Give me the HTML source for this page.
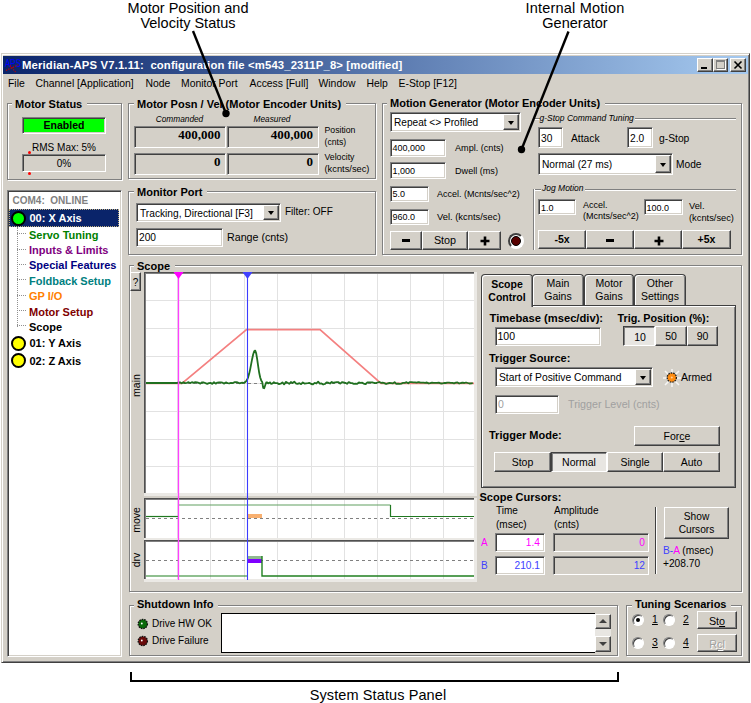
<!DOCTYPE html><html><head><meta charset="utf-8"><style>
html,body{margin:0;padding:0;background:#fff;width:751px;height:703px;overflow:hidden;}
body{position:relative;font-family:"Liberation Sans",sans-serif;}
.t{position:absolute;white-space:pre;line-height:1.117;}
.grp{position:absolute;box-sizing:border-box;border:1px solid #808080;box-shadow:inset 1px 1px 0 #fff,1px 1px 0 #fff;}
.sunk{position:absolute;box-sizing:border-box;border:1px solid;border-color:#808080 #fff #fff #808080;box-shadow:inset 1px 1px 0 #404040,inset -1px -1px 0 #d4d0c8;}
.btn{position:absolute;box-sizing:border-box;background:#d4d0c8;border:1px solid;border-color:#fff #404040 #404040 #fff;box-shadow:inset -1px -1px 0 #808080;}
.abs{position:absolute;}
</style></head><body>

<div class="t" style="left:-12px;width:400px;text-align:center;top:0.17px;font-size:14.5px;color:#000;">Motor Position and</div>
<div class="t" style="left:-12px;width:400px;text-align:center;top:15.17px;font-size:14.5px;color:#000;">Velocity Status</div>
<div class="t" style="left:375px;width:400px;text-align:center;top:0.17px;font-size:14.5px;color:#000;letter-spacing:0.2px">Internal Motion</div>
<div class="t" style="left:375px;width:400px;text-align:center;top:15.17px;font-size:14.5px;color:#000;">Generator</div>
<div class="abs" style="left:1px;top:53px;width:749px;height:610px;box-sizing:border-box;background:#d4d0c8;border:1px solid;border-color:#d4d0c8 #404040 #404040 #d4d0c8;box-shadow:inset 1px 1px 0 #fff,inset -1px -1px 0 #808080;"></div>
<div class="abs" style="left:3px;top:56px;width:745px;height:18px;background:linear-gradient(to right,#0a246a,#a6caf0);"></div>
<svg class="abs" style="left:4px;top:57px" width="18" height="16" viewBox="0 0 18 16"><text x="1" y="9.7" font-family="Liberation Sans" font-size="10" textLength="16" lengthAdjust="spacingAndGlyphs" fill="#0000ff">APS</text><path d="M2 13.5 L14 8 M6 8.5 L11.5 15" stroke="#c00000" stroke-width="1.3" stroke-dasharray="1.3 1.2"/></svg>
<div class="t" style="left:22px;top:58.90px;font-size:11.3px;color:#fff;font-weight:bold;letter-spacing:0.15px">Meridian-APS V7.1.11:  configuration file &lt;m543_2311P_8&gt; [modified]</div>
<div class="btn" style="left:697px;top:58px;width:16px;height:14px;"></div>
<div class="btn" style="left:713px;top:58px;width:15px;height:14px;"></div>
<div class="btn" style="left:730px;top:58px;width:16px;height:14px;"></div>
<div class="abs" style="left:701px;top:67px;width:6px;height:2px;background:#000"></div>
<div class="abs" style="left:716px;top:60px;width:9px;height:9px;box-sizing:border-box;border:1px solid #808080;border-top-width:2px;box-shadow:1px 1px 0 #fff"></div>
<svg class="abs" style="left:730px;top:58px" width="16" height="14"><path d="M4.5 3.5 L11.5 10.5 M11.5 3.5 L4.5 10.5" stroke="#000" stroke-width="1.6"/></svg>
<div class="t" style="left:8px;top:78.18px;font-size:10.4px;color:#000;">File</div>
<div class="t" style="left:35.5px;top:78.18px;font-size:10.4px;color:#000;">Channel [Application]</div>
<div class="t" style="left:145.5px;top:78.18px;font-size:10.4px;color:#000;">Node</div>
<div class="t" style="left:181px;top:78.18px;font-size:10.4px;color:#000;">Monitor Port</div>
<div class="t" style="left:249.5px;top:78.18px;font-size:10.4px;color:#000;">Access [Full]</div>
<div class="t" style="left:318.5px;top:78.18px;font-size:10.4px;color:#000;">Window</div>
<div class="t" style="left:366.5px;top:78.18px;font-size:10.4px;color:#000;">Help</div>
<div class="t" style="left:398.5px;top:78.18px;font-size:10.4px;color:#000;">E-Stop [F12]</div>
<div class="grp" style="left:7px;top:103px;width:115px;height:77px;"></div>
<div class="t" style="left:12px;top:97.56px;font-size:11px;padding:0 5px 0 3px;background:#d4d0c8;font-weight:bold;">Motor Status</div>
<div class="sunk" style="left:22px;top:117px;width:84px;height:17px;background:#00ff00;"></div>
<div class="t" style="left:-136px;width:400px;text-align:center;top:119.83px;font-size:10.5px;color:#000;font-weight:bold;">Enabled</div>
<div class="t" style="left:-136px;width:400px;text-align:center;top:141.60px;font-size:10px;color:#000;">RMS Max: 5%</div>
<div class="sunk" style="left:22px;top:154px;width:84px;height:18px;background:#d4d0c8;"></div>
<div class="t" style="left:-136px;width:400px;text-align:center;top:157.60px;font-size:10px;color:#000;">0%</div>
<div class="abs" style="left:28px;top:151px;width:3px;height:3px;background:#f00;border-radius:50%"></div>
<div class="abs" style="left:28px;top:172px;width:3px;height:3px;background:#f00;border-radius:50%"></div>
<div class="sunk" style="left:7px;top:190px;width:115px;height:467px;background:#fff;"></div>
<div class="t" style="left:12.5px;top:195.10px;font-size:10px;color:#808080;font-weight:bold;">COM4:  ONLINE</div>
<div class="abs" style="left:9px;top:209px;width:110px;height:18px;background:#0a246a;outline:1px dotted #c0b080;outline-offset:-1px"></div>
<div class="abs" style="left:11px;top:210.5px;width:15px;height:15px;border-radius:50%;background:#00ff00;border:2px solid #000;box-sizing:border-box"></div>
<div class="t" style="left:29.5px;top:212.06px;font-size:11px;color:#fff;font-weight:bold;">00: X Axis</div>
<div class="t" style="left:29px;top:228.66px;font-size:11px;color:#008000;font-weight:bold;">Servo Tuning</div>
<div class="abs" style="left:17px;top:233px;width:9px;height:0;border-top:1px dotted #909090"></div>
<div class="t" style="left:29px;top:244.06px;font-size:11px;color:#800080;font-weight:bold;">Inputs &amp; Limits</div>
<div class="abs" style="left:17px;top:249px;width:9px;height:0;border-top:1px dotted #909090"></div>
<div class="t" style="left:29px;top:259.46px;font-size:11px;color:#000080;font-weight:bold;">Special Features</div>
<div class="abs" style="left:17px;top:264px;width:9px;height:0;border-top:1px dotted #909090"></div>
<div class="t" style="left:29px;top:274.86px;font-size:11px;color:#008080;font-weight:bold;">Foldback Setup</div>
<div class="abs" style="left:17px;top:279px;width:9px;height:0;border-top:1px dotted #909090"></div>
<div class="t" style="left:29px;top:290.26px;font-size:11px;color:#ff8000;font-weight:bold;">GP I/O</div>
<div class="abs" style="left:17px;top:295px;width:9px;height:0;border-top:1px dotted #909090"></div>
<div class="t" style="left:29px;top:305.66px;font-size:11px;color:#800000;font-weight:bold;">Motor Setup</div>
<div class="abs" style="left:17px;top:310px;width:9px;height:0;border-top:1px dotted #909090"></div>
<div class="t" style="left:29px;top:321.06px;font-size:11px;color:#000;font-weight:bold;">Scope</div>
<div class="abs" style="left:17px;top:325px;width:9px;height:0;border-top:1px dotted #909090"></div>
<div class="abs" style="left:17px;top:227px;width:0;height:100px;border-left:1px dotted #909090"></div>
<div class="abs" style="left:11px;top:335.7px;width:15px;height:15px;border-radius:50%;background:#ffff00;border:2px solid #000;box-sizing:border-box"></div>
<div class="t" style="left:29.5px;top:337.26px;font-size:11px;color:#000;font-weight:bold;">01: Y Axis</div>
<div class="abs" style="left:11px;top:353.0px;width:15px;height:15px;border-radius:50%;background:#ffff00;border:2px solid #000;box-sizing:border-box"></div>
<div class="t" style="left:29.5px;top:354.56px;font-size:11px;color:#000;font-weight:bold;">02: Z Axis</div>
<div class="grp" style="left:128px;top:103px;width:248px;height:76px;"></div>
<div class="t" style="left:134px;top:97.56px;font-size:11px;padding:0 5px 0 3px;background:#d4d0c8;font-weight:bold;">Motor Posn / Vel (Motor Encoder Units)</div>
<div class="t" style="left:-20.5px;width:400px;text-align:center;top:115.02px;font-size:8.3px;color:#000;font-style:italic;">Commanded</div>
<div class="t" style="left:72px;width:400px;text-align:center;top:115.02px;font-size:8.3px;color:#000;font-style:italic;">Measured</div>
<div class="sunk" style="left:134px;top:126px;width:92px;height:22px;background:#d4d0c8;"></div>
<div class="sunk" style="left:227px;top:126px;width:92px;height:22px;background:#d4d0c8;"></div>
<div class="sunk" style="left:134px;top:153px;width:92px;height:22px;background:#d4d0c8;"></div>
<div class="sunk" style="left:227px;top:153px;width:92px;height:22px;background:#d4d0c8;"></div>
<div class="t" style="left:-179.5px;width:400px;text-align:right;top:127.98px;font-size:13px;color:#000;font-weight:bold;font-family:'Liberation Serif',serif;">400,000</div>
<div class="t" style="left:-87px;width:400px;text-align:right;top:127.98px;font-size:13px;color:#000;font-weight:bold;font-family:'Liberation Serif',serif;">400,000</div>
<div class="t" style="left:-179.5px;width:400px;text-align:right;top:155.48px;font-size:13px;color:#000;font-weight:bold;font-family:'Liberation Serif',serif;">0</div>
<div class="t" style="left:-87px;width:400px;text-align:right;top:155.48px;font-size:13px;color:#000;font-weight:bold;font-family:'Liberation Serif',serif;">0</div>
<div class="t" style="left:324.5px;top:126.10px;font-size:8.7px;color:#000;">Position</div>
<div class="t" style="left:324.5px;top:137.60px;font-size:8.7px;color:#000;">(cnts)</div>
<div class="t" style="left:324.5px;top:153.10px;font-size:8.7px;color:#000;">Velocity</div>
<div class="t" style="left:324.5px;top:164.18px;font-size:9.3px;color:#000;">(kcnts/sec)</div>
<div class="grp" style="left:128px;top:191px;width:248px;height:64px;"></div>
<div class="t" style="left:134px;top:185.56px;font-size:11px;padding:0 5px 0 3px;background:#d4d0c8;font-weight:bold;">Monitor Port</div>
<div class="sunk" style="left:136px;top:203px;width:145px;height:19px;background:#fff;"></div>
<div class="btn" style="left:263px;top:205px;width:16px;height:15px;"></div>
<div style="position:absolute;left:267.5px;top:211.0px;width:0;height:0;border-left:3.5px solid transparent;border-right:3.5px solid transparent;border-top:4px solid #000"></div>
<div class="t" style="left:140px;top:207.59px;font-size:10.2px;color:#000;">Tracking, Directional [F3]</div>
<div class="t" style="left:285px;top:205.60px;font-size:10px;color:#000;">Filter: OFF</div>
<div class="sunk" style="left:136px;top:228px;width:87px;height:19px;background:#fff;"></div>
<div class="t" style="left:139px;top:231.99px;font-size:10.2px;color:#000;">200</div>
<div class="t" style="left:227px;top:232.22px;font-size:10.7px;color:#000;">Range (cnts)</div>
<div class="grp" style="left:382px;top:103px;width:360px;height:152px;"></div>
<div class="t" style="left:387px;top:97.06px;font-size:11px;padding:0 5px 0 3px;background:#d4d0c8;font-weight:bold;">Motion Generator (Motor Encoder Units)</div>
<div class="sunk" style="left:390px;top:112px;width:131px;height:20px;background:#fff;"></div>
<div class="btn" style="left:503px;top:114px;width:16px;height:16px;"></div>
<div style="position:absolute;left:507.5px;top:120.5px;width:0;height:0;border-left:3.5px solid transparent;border-right:3.5px solid transparent;border-top:4px solid #000"></div>
<div class="t" style="left:394px;top:117.15px;font-size:10.1px;color:#000;">Repeat &lt;&gt; Profiled</div>
<div class="sunk" style="left:390px;top:139px;width:56px;height:18px;background:#fff;"></div>
<div class="t" style="left:392.5px;top:143.14px;font-size:9px;color:#000;">400,000</div>
<div class="sunk" style="left:390px;top:162px;width:56px;height:17px;background:#fff;"></div>
<div class="t" style="left:392.5px;top:165.64px;font-size:9px;color:#000;">1,000</div>
<div class="sunk" style="left:390px;top:186px;width:39px;height:16px;background:#fff;"></div>
<div class="t" style="left:392.5px;top:189.14px;font-size:9px;color:#000;">5.0</div>
<div class="sunk" style="left:390px;top:209px;width:39px;height:16px;background:#fff;"></div>
<div class="t" style="left:392.5px;top:212.14px;font-size:9px;color:#000;">960.0</div>
<div class="t" style="left:455px;top:143.09px;font-size:9.1px;color:#000;">Ampl. (cnts)</div>
<div class="t" style="left:455px;top:165.59px;font-size:9.1px;color:#000;">Dwell (ms)</div>
<div class="t" style="left:437px;top:189.14px;font-size:9px;color:#000;">Accel. (Mcnts/sec^2)</div>
<div class="t" style="left:437px;top:211.92px;font-size:9.4px;color:#000;">Vel. (kcnts/sec)</div>
<div class="btn" style="left:390px;top:231px;width:32px;height:19px;"></div>
<div class="abs" style="left:402px;top:239.0px;width:8px;height:3px;background:#000"></div>
<div class="btn" style="left:422px;top:231px;width:46px;height:19px;"></div>
<div class="t" style="left:245.0px;width:400px;text-align:center;top:234.07px;font-size:10.8px;color:#000;">Stop</div>
<div class="btn" style="left:468px;top:231px;width:33px;height:19px;"></div>
<svg class="abs" style="left:479.5px;top:235.5px" width="10" height="10"><path d="M0.5 5 H9.5 M5 0.5 V9.5" stroke="#000" stroke-width="2.6"/></svg>
<div class="abs" style="left:508px;top:233px;width:16px;height:16px;border-radius:50%;box-sizing:border-box;border:2px solid;border-color:#404040 #fff #fff #404040;background:#fff"></div>
<div class="abs" style="left:511px;top:236px;width:10px;height:10px;border-radius:50%;background:#580000;border:1.5px solid #000;box-sizing:border-box"></div>
<div class="abs" style="left:533px;top:118px;width:203px;height:0;border-top:1px solid #808080;border-bottom:1px solid #fff"></div>
<div class="t" style="left:539.5px;top:113.91px;font-size:8.5px;color:#000;font-style:italic;background:#d4d0c8;padding-right:1px">g-Stop Command Tuning</div>
<div class="sunk" style="left:538px;top:127px;width:25px;height:21px;background:#fff;"></div>
<div class="t" style="left:541px;top:132.79px;font-size:10.2px;color:#000;">30</div>
<div class="t" style="left:571px;top:133.44px;font-size:10.3px;color:#000;">Attack</div>
<div class="sunk" style="left:627px;top:127px;width:26px;height:21px;background:#fff;"></div>
<div class="t" style="left:630px;top:132.79px;font-size:10.2px;color:#000;">2.0</div>
<div class="t" style="left:659px;top:133.44px;font-size:10.3px;color:#000;">g-Stop</div>
<div class="sunk" style="left:538px;top:153px;width:135px;height:22px;background:#fff;"></div>
<div class="btn" style="left:655px;top:155px;width:16px;height:18px;"></div>
<div style="position:absolute;left:659.5px;top:162.5px;width:0;height:0;border-left:3.5px solid transparent;border-right:3.5px solid transparent;border-top:4px solid #000"></div>
<div class="t" style="left:542px;top:159.09px;font-size:10.2px;color:#000;">Normal (27 ms)</div>
<div class="t" style="left:676px;top:158.99px;font-size:10.2px;color:#000;">Mode</div>
<div class="abs" style="left:533px;top:189px;width:203px;height:0;border-top:1px solid #808080;border-bottom:1px solid #fff"></div>
<div class="abs" style="left:533px;top:189px;width:0;height:61px;border-left:1px solid #808080;border-right:1px solid #fff"></div>
<div class="t" style="left:541px;top:184.41px;font-size:8.5px;color:#000;font-style:italic;background:#d4d0c8;padding:0 1px">Jog Motion</div>
<div class="sunk" style="left:538px;top:199px;width:38px;height:16px;background:#fff;"></div>
<div class="t" style="left:541px;top:202.64px;font-size:9px;color:#000;">1.0</div>
<div class="t" style="left:583px;top:200.14px;font-size:9px;color:#000;">Accel.</div>
<div class="t" style="left:583px;top:211.14px;font-size:9px;color:#000;">(Mcnts/sec^2)</div>
<div class="sunk" style="left:644px;top:199px;width:39px;height:16px;background:#fff;"></div>
<div class="t" style="left:646.5px;top:202.64px;font-size:9px;color:#000;">100.0</div>
<div class="t" style="left:689px;top:200.98px;font-size:9.3px;color:#000;">Vel.</div>
<div class="t" style="left:689px;top:212.98px;font-size:9.3px;color:#000;">(kcnts/sec)</div>
<div class="btn" style="left:538px;top:230px;width:48px;height:19px;"></div>
<div class="t" style="left:362.0px;width:400px;text-align:center;top:233.83px;font-size:10.5px;color:#000;font-weight:bold;">-5x</div>
<div class="btn" style="left:586px;top:230px;width:48px;height:19px;"></div>
<div class="abs" style="left:606px;top:238.5px;width:8px;height:3px;background:#000"></div>
<div class="btn" style="left:634px;top:230px;width:48px;height:19px;"></div>
<svg class="abs" style="left:653.5px;top:235.5px" width="10" height="10"><path d="M0.5 5 H9.5 M5 0.5 V9.5" stroke="#000" stroke-width="2.6"/></svg>
<div class="btn" style="left:682px;top:230px;width:49px;height:19px;"></div>
<div class="t" style="left:506.5px;width:400px;text-align:center;top:233.83px;font-size:10.5px;color:#000;font-weight:bold;">+5x</div>
<div class="grp" style="left:129px;top:265px;width:613px;height:327px;"></div>
<div class="t" style="left:134px;top:259.56px;font-size:11px;padding:0 5px 0 3px;background:#d4d0c8;font-weight:bold;">Scope</div>
<div class="btn" style="left:130px;top:272px;width:11px;height:19px;"></div>
<div class="t" style="left:-64.5px;width:400px;text-align:center;top:276.90px;font-size:10px;color:#000;">?</div>
<div class="abs" style="left:481px;top:305px;width:255px;height:183px;box-sizing:border-box;border:1px solid #404040;box-shadow:inset 1px 1px 0 #fff,inset -1px -1px 0 #808080;background:#d4d0c8"></div>
<div class="abs" style="left:532px;top:274px;width:52px;height:31px;box-sizing:border-box;border:1px solid #404040;border-bottom:none;box-shadow:inset 1px 1px 0 #fff,inset -1px 0 0 #808080;border-radius:4px 4px 0 0;background:#d4d0c8"></div>
<div class="t" style="left:358.0px;width:400px;text-align:center;top:278.13px;font-size:10.5px;color:#000;">Main</div>
<div class="t" style="left:358.0px;width:400px;text-align:center;top:290.93px;font-size:10.5px;color:#000;">Gains</div>
<div class="abs" style="left:584px;top:274px;width:50px;height:31px;box-sizing:border-box;border:1px solid #404040;border-bottom:none;box-shadow:inset 1px 1px 0 #fff,inset -1px 0 0 #808080;border-radius:4px 4px 0 0;background:#d4d0c8"></div>
<div class="t" style="left:409.0px;width:400px;text-align:center;top:278.13px;font-size:10.5px;color:#000;">Motor</div>
<div class="t" style="left:409.0px;width:400px;text-align:center;top:290.93px;font-size:10.5px;color:#000;">Gains</div>
<div class="abs" style="left:634px;top:274px;width:52px;height:31px;box-sizing:border-box;border:1px solid #404040;border-bottom:none;box-shadow:inset 1px 1px 0 #fff,inset -1px 0 0 #808080;border-radius:4px 4px 0 0;background:#d4d0c8"></div>
<div class="t" style="left:460.0px;width:400px;text-align:center;top:278.13px;font-size:10.5px;color:#000;">Other</div>
<div class="t" style="left:460.0px;width:400px;text-align:center;top:290.93px;font-size:10.5px;color:#000;">Settings</div>
<div class="abs" style="left:481px;top:274px;width:52px;height:33px;box-sizing:border-box;border:1px solid #404040;border-bottom:none;box-shadow:inset 1px 1px 0 #fff,inset -1px 0 0 #808080;border-radius:4px 4px 0 0;background:#d4d0c8"></div>
<div class="abs" style="left:482px;top:305px;width:1px;height:2px;background:#fff"></div>
<div class="t" style="left:307.0px;width:400px;text-align:center;top:278.63px;font-size:10.5px;color:#000;font-weight:bold;">Scope</div>
<div class="t" style="left:307.0px;width:400px;text-align:center;top:291.63px;font-size:10.5px;color:#000;font-weight:bold;">Control</div>
<div class="t" style="left:489.5px;top:311.95px;font-size:11.2px;color:#000;font-weight:bold;">Timebase (msec/div):</div>
<div class="sunk" style="left:495px;top:327px;width:106px;height:19px;background:#fff;"></div>
<div class="t" style="left:497.5px;top:330.83px;font-size:10.5px;color:#000;">100</div>
<div class="t" style="left:617.5px;top:312.17px;font-size:10.8px;color:#000;font-weight:bold;">Trig. Position (%):</div>
<div class="abs" style="left:623px;top:326px;width:32px;height:20px;box-sizing:border-box;border:1px solid;border-color:#404040 #fff #fff #404040;box-shadow:inset 1px 1px 0 #808080;background:#e8e6e2"></div>
<div class="t" style="left:440px;width:400px;text-align:center;top:331.83px;font-size:10.5px;color:#000;">10</div>
<div class="btn" style="left:655px;top:326px;width:32px;height:20px;"></div>
<div class="t" style="left:471.0px;width:400px;text-align:center;top:331.13px;font-size:10.5px;color:#000;">50</div>
<div class="btn" style="left:687px;top:326px;width:31px;height:20px;"></div>
<div class="t" style="left:502.5px;width:400px;text-align:center;top:331.13px;font-size:10.5px;color:#000;">90</div>
<div class="t" style="left:489px;top:352.06px;font-size:11px;color:#000;font-weight:bold;">Trigger Source:</div>
<div class="sunk" style="left:495px;top:367px;width:158px;height:20px;background:#fff;"></div>
<div class="btn" style="left:635px;top:369px;width:16px;height:16px;"></div>
<div style="position:absolute;left:639.5px;top:375.5px;width:0;height:0;border-left:3.5px solid transparent;border-right:3.5px solid transparent;border-top:4px solid #000"></div>
<div class="t" style="left:499px;top:372.04px;font-size:10.3px;color:#000;">Start of Positive Command</div>
<svg class="abs" style="left:662px;top:368px" width="20" height="20"><path d="M3 3 L17 17 M17 3 L3 17 M10 1 V19 M1 10 H19" stroke="#fff" stroke-width="1.5" opacity="0.8"/><circle cx="9.8" cy="9.6" r="4.6" fill="#ff8c10" stroke="#202020" stroke-width="1.3" stroke-dasharray="1.6 0.9"/><circle cx="9.8" cy="9.6" r="1" fill="#ffd0a0"/></svg>
<div class="t" style="left:681px;top:372.33px;font-size:10.5px;color:#000;">Armed</div>
<div class="sunk" style="left:495px;top:395px;width:64px;height:19px;background:#fff;"></div>
<div class="t" style="left:498px;top:398.83px;font-size:10.5px;color:#a0a0a0;">0</div>
<div class="t" style="left:568px;top:399.22px;font-size:10.7px;color:#a0a0a0;">Trigger Level (cnts)</div>
<div class="t" style="left:489px;top:428.86px;font-size:11px;color:#000;font-weight:bold;">Trigger Mode:</div>
<div class="btn" style="left:634px;top:426px;width:86px;height:20px;"></div>
<div class="t" style="left:477px;width:400px;text-align:center;top:431.1px;font-size:10.5px;">For<u>c</u>e</div>
<div class="btn" style="left:494px;top:452px;width:57px;height:20px;"></div>
<div class="t" style="left:322.5px;width:400px;text-align:center;top:457.13px;font-size:10.5px;color:#000;">Stop</div>
<div class="abs" style="left:551px;top:452px;width:56px;height:20px;box-sizing:border-box;border:1px solid;border-color:#404040 #fff #fff #404040;box-shadow:inset 1px 1px 0 #808080;background:#e8e6e2"></div>
<div class="t" style="left:379px;width:400px;text-align:center;top:457.33px;font-size:10.5px;color:#000;">Normal</div>
<div class="btn" style="left:607px;top:452px;width:56px;height:20px;"></div>
<div class="t" style="left:435.0px;width:400px;text-align:center;top:457.13px;font-size:10.5px;color:#000;">Single</div>
<div class="btn" style="left:663px;top:452px;width:57px;height:20px;"></div>
<div class="t" style="left:491.5px;width:400px;text-align:center;top:457.13px;font-size:10.5px;color:#000;">Auto</div>
<div class="t" style="left:479.5px;top:491.06px;font-size:11px;color:#000;font-weight:bold;">Scope Cursors:</div>
<div class="t" style="left:496px;top:505.10px;font-size:10px;color:#000;">Time</div>
<div class="t" style="left:496px;top:518.60px;font-size:10px;color:#000;">(msec)</div>
<div class="t" style="left:554px;top:505.10px;font-size:10px;color:#000;">Amplitude</div>
<div class="t" style="left:554px;top:518.60px;font-size:10px;color:#000;">(cnts)</div>
<div class="t" style="left:481px;top:537.10px;font-size:10px;color:#ff00ff;">A</div>
<div class="t" style="left:481px;top:559.60px;font-size:10px;color:#4040ff;">B</div>
<div class="sunk" style="left:495px;top:533px;width:50px;height:19px;background:#fff;"></div>
<div class="t" style="left:140px;width:400px;text-align:right;top:536.99px;font-size:10.2px;color:#ff00ff;">1.4</div>
<div class="sunk" style="left:553px;top:533px;width:96px;height:19px;background:#d4d0c8;"></div>
<div class="t" style="left:245px;width:400px;text-align:right;top:536.99px;font-size:10.2px;color:#ff00ff;">0</div>
<div class="sunk" style="left:495px;top:556px;width:50px;height:19px;background:#fff;"></div>
<div class="t" style="left:140px;width:400px;text-align:right;top:559.99px;font-size:10.2px;color:#4040ff;">210.1</div>
<div class="sunk" style="left:553px;top:556px;width:96px;height:19px;background:#d4d0c8;"></div>
<div class="t" style="left:245px;width:400px;text-align:right;top:559.99px;font-size:10.2px;color:#4040ff;">12</div>
<div class="abs" style="left:655px;top:507px;width:0;height:67px;border-left:1px solid #404040;border-right:1px solid #fff"></div>
<div class="btn" style="left:664px;top:507px;width:65px;height:32px;"></div>
<div class="t" style="left:496.5px;width:400px;text-align:center;top:510.99px;font-size:10.2px;color:#000;">Show</div>
<div class="t" style="left:496.5px;width:400px;text-align:center;top:524.29px;font-size:10.2px;color:#000;">Cursors</div>
<div class="t" style="left:663px;top:545px;font-size:10.2px;"><span style="color:#4040ff">B-</span><span style="color:#ff00ff">A</span> (msec)</div>
<div class="t" style="left:663px;top:557.99px;font-size:10.2px;color:#000;">+208.70</div>
<div class="grp" style="left:129px;top:605px;width:489px;height:51px;"></div>
<div class="t" style="left:134px;top:598.06px;font-size:11px;padding:0 5px 0 3px;background:#d4d0c8;font-weight:bold;">Shutdown Info</div>
<svg class="abs" style="left:137px;top:617.5px" width="12" height="12"><circle cx="5.8" cy="6" r="4.6" fill="#0a6a0a" stroke="#101010" stroke-width="1.3" stroke-dasharray="1.6 0.9"/><circle cx="4.8" cy="5.5" r="0.9" fill="#fff"/></svg>
<div class="t" style="left:152px;top:618.10px;font-size:10px;color:#000;">Drive HW OK</div>
<svg class="abs" style="left:137px;top:634.5px" width="12" height="12"><circle cx="5.8" cy="6" r="4.6" fill="#6a0a0a" stroke="#101010" stroke-width="1.3" stroke-dasharray="1.6 0.9"/><circle cx="4.8" cy="5.5" r="0.9" fill="#fff"/></svg>
<div class="t" style="left:152px;top:635.10px;font-size:10px;color:#000;">Drive Failure</div>
<div class="abs" style="left:221px;top:613px;width:374px;height:40px;box-sizing:border-box;background:#fff;border:1px solid #000;border-right:none"></div>
<div class="abs" style="left:595px;top:614px;width:16px;height:38px;background:#e8e6e2"></div>
<div class="btn" style="left:595px;top:614px;width:16px;height:15px;"></div>
<div class="btn" style="left:595px;top:636px;width:16px;height:16px;"></div>
<div class="abs" style="left:599px;top:619px;width:0;height:0;border-left:4px solid transparent;border-right:4px solid transparent;border-bottom:4px solid #404040"></div>
<div class="abs" style="left:599px;top:642px;width:0;height:0;border-left:4px solid transparent;border-right:4px solid transparent;border-top:4px solid #404040"></div>
<div class="grp" style="left:626px;top:605px;width:116px;height:51px;"></div>
<div class="t" style="left:632px;top:598.06px;font-size:11px;padding:0 5px 0 3px;background:#d4d0c8;font-weight:bold;">Tuning Scenarios</div>
<div class="abs" style="left:632px;top:614px;width:12px;height:12px;border-radius:50%;box-sizing:border-box;border:1px solid;border-color:#808080 #fff #fff #808080;background:#fff;box-shadow:inset 1px 1px 0 #404040"></div>
<div class="abs" style="left:636px;top:618px;width:4px;height:4px;border-radius:50%;background:#000"></div>
<div class="t" style="left:652px;top:614.33px;font-size:10.5px;color:#000;text-decoration:underline">1</div>
<div class="abs" style="left:663px;top:614px;width:12px;height:12px;border-radius:50%;box-sizing:border-box;border:1px solid;border-color:#808080 #fff #fff #808080;background:#fff;box-shadow:inset 1px 1px 0 #404040"></div>
<div class="t" style="left:683px;top:614.33px;font-size:10.5px;color:#000;text-decoration:underline">2</div>
<div class="abs" style="left:632px;top:637px;width:12px;height:12px;border-radius:50%;box-sizing:border-box;border:1px solid;border-color:#808080 #fff #fff #808080;background:#fff;box-shadow:inset 1px 1px 0 #404040"></div>
<div class="t" style="left:652px;top:637.33px;font-size:10.5px;color:#000;text-decoration:underline">3</div>
<div class="abs" style="left:663px;top:637px;width:12px;height:12px;border-radius:50%;box-sizing:border-box;border:1px solid;border-color:#808080 #fff #fff #808080;background:#fff;box-shadow:inset 1px 1px 0 #404040"></div>
<div class="t" style="left:683px;top:637.33px;font-size:10.5px;color:#000;text-decoration:underline">4</div>
<div class="btn" style="left:697px;top:611px;width:40px;height:18px;"></div>
<div class="t" style="left:517px;width:400px;text-align:center;top:614.5px;font-size:10.8px;">St<u>o</u></div>
<div class="btn" style="left:697px;top:634px;width:40px;height:18px;"></div>
<div class="t" style="left:517px;width:400px;text-align:center;top:637.5px;font-size:10.8px;color:#a0a0a0;text-shadow:1px 1px 0 #fff">R<u>c</u>l</div>
<div class="abs" style="left:130px;top:672px;width:489px;height:10px;box-sizing:border-box;border:2px solid #000;border-top:none"></div>
<div class="t" style="left:178px;width:400px;text-align:center;top:686.67px;font-size:14.5px;color:#000;letter-spacing:0.1px">System Status Panel</div>
<svg class="abs" style="left:0;top:0" width="751" height="703" viewBox="0 0 751 703"><rect x="144" y="272" width="333" height="224" fill="#ebe9e5"/><rect x="144" y="272" width="330" height="1" fill="#505050"/><rect x="145" y="273" width="329" height="1" fill="#808080"/><rect x="144" y="272" width="1" height="221" fill="#505050"/><rect x="145" y="273" width="1" height="220" fill="#808080"/><rect x="146" y="274" width="328" height="219" fill="#fff"/><line x1="177.5" y1="274" x2="177.5" y2="493" stroke="#e2e2e2" stroke-width="1"/><line x1="210.5" y1="274" x2="210.5" y2="493" stroke="#e2e2e2" stroke-width="1"/><line x1="244.5" y1="274" x2="244.5" y2="493" stroke="#e2e2e2" stroke-width="1"/><line x1="277.5" y1="274" x2="277.5" y2="493" stroke="#e2e2e2" stroke-width="1"/><line x1="311.5" y1="274" x2="311.5" y2="493" stroke="#e2e2e2" stroke-width="1"/><line x1="344.5" y1="274" x2="344.5" y2="493" stroke="#e2e2e2" stroke-width="1"/><line x1="377.5" y1="274" x2="377.5" y2="493" stroke="#e2e2e2" stroke-width="1"/><line x1="410.5" y1="274" x2="410.5" y2="493" stroke="#e2e2e2" stroke-width="1"/><line x1="443.5" y1="274" x2="443.5" y2="493" stroke="#e2e2e2" stroke-width="1"/><line x1="146" y1="300.5" x2="474" y2="300.5" stroke="#e2e2e2" stroke-width="1"/><line x1="146" y1="328.5" x2="474" y2="328.5" stroke="#e2e2e2" stroke-width="1"/><line x1="146" y1="356.5" x2="474" y2="356.5" stroke="#e2e2e2" stroke-width="1"/><line x1="146" y1="383.5" x2="474" y2="383.5" stroke="#e2e2e2" stroke-width="1"/><line x1="146" y1="411.5" x2="474" y2="411.5" stroke="#e2e2e2" stroke-width="1"/><line x1="146" y1="439.5" x2="474" y2="439.5" stroke="#e2e2e2" stroke-width="1"/><line x1="146" y1="466.5" x2="474" y2="466.5" stroke="#e2e2e2" stroke-width="1"/><text x="0" y="0" transform="translate(140,385.5) rotate(-90)" font-family="Liberation Sans" font-size="10.5" text-anchor="middle" fill="#000">main</text><rect x="144" y="498" width="333" height="43" fill="#ebe9e5"/><rect x="144" y="498" width="330" height="1" fill="#505050"/><rect x="145" y="499" width="329" height="1" fill="#808080"/><rect x="144" y="498" width="1" height="40" fill="#505050"/><rect x="145" y="499" width="1" height="39" fill="#808080"/><rect x="146" y="500" width="328" height="38" fill="#fff"/><line x1="177.5" y1="500" x2="177.5" y2="538" stroke="#e2e2e2" stroke-width="1"/><line x1="210.5" y1="500" x2="210.5" y2="538" stroke="#e2e2e2" stroke-width="1"/><line x1="244.5" y1="500" x2="244.5" y2="538" stroke="#e2e2e2" stroke-width="1"/><line x1="277.5" y1="500" x2="277.5" y2="538" stroke="#e2e2e2" stroke-width="1"/><line x1="311.5" y1="500" x2="311.5" y2="538" stroke="#e2e2e2" stroke-width="1"/><line x1="344.5" y1="500" x2="344.5" y2="538" stroke="#e2e2e2" stroke-width="1"/><line x1="377.5" y1="500" x2="377.5" y2="538" stroke="#e2e2e2" stroke-width="1"/><line x1="410.5" y1="500" x2="410.5" y2="538" stroke="#e2e2e2" stroke-width="1"/><line x1="443.5" y1="500" x2="443.5" y2="538" stroke="#e2e2e2" stroke-width="1"/><text x="0" y="0" transform="translate(140,520) rotate(-90)" font-family="Liberation Sans" font-size="10.5" text-anchor="middle" fill="#000">move</text><rect x="144" y="540" width="333" height="42" fill="#ebe9e5"/><rect x="144" y="540" width="330" height="1" fill="#505050"/><rect x="145" y="541" width="329" height="1" fill="#808080"/><rect x="144" y="540" width="1" height="39" fill="#505050"/><rect x="145" y="541" width="1" height="38" fill="#808080"/><rect x="146" y="542" width="328" height="37" fill="#fff"/><line x1="177.5" y1="542" x2="177.5" y2="579" stroke="#e2e2e2" stroke-width="1"/><line x1="210.5" y1="542" x2="210.5" y2="579" stroke="#e2e2e2" stroke-width="1"/><line x1="244.5" y1="542" x2="244.5" y2="579" stroke="#e2e2e2" stroke-width="1"/><line x1="277.5" y1="542" x2="277.5" y2="579" stroke="#e2e2e2" stroke-width="1"/><line x1="311.5" y1="542" x2="311.5" y2="579" stroke="#e2e2e2" stroke-width="1"/><line x1="344.5" y1="542" x2="344.5" y2="579" stroke="#e2e2e2" stroke-width="1"/><line x1="377.5" y1="542" x2="377.5" y2="579" stroke="#e2e2e2" stroke-width="1"/><line x1="410.5" y1="542" x2="410.5" y2="579" stroke="#e2e2e2" stroke-width="1"/><line x1="443.5" y1="542" x2="443.5" y2="579" stroke="#e2e2e2" stroke-width="1"/><text x="0" y="0" transform="translate(140,560) rotate(-90)" font-family="Liberation Sans" font-size="10.5" text-anchor="middle" fill="#000">drv</text><line x1="146" y1="383.5" x2="474" y2="383.5" stroke="#808080" stroke-dasharray="3 3"/><line x1="146" y1="518.5" x2="474" y2="518.5" stroke="#808080" stroke-dasharray="3 3"/><line x1="146" y1="560.5" x2="474" y2="560.5" stroke="#808080" stroke-dasharray="3 3"/><polyline points="146,383.3 182,383.3 246.5,329.6 320,329.6 381,383.3 474,383.3" fill="none" stroke="#f48080" stroke-width="1.7"/><polyline points="146.0,383.0 147.7,383.0 149.4,383.0 151.1,383.0 152.8,383.0 154.5,383.0 156.2,383.0 157.9,383.0 159.6,383.0 161.3,383.0 163.0,383.0 164.7,383.0 166.4,383.0 168.1,383.0 169.8,383.0 171.5,383.0 173.2,383.0 174.9,383.0 176.6,383.0 178.3,382.7 180.0,382.4 181.7,383.3 183.4,382.2 185.1,383.1 186.8,382.8 188.5,382.2 190.2,383.0 191.9,382.2 193.6,382.9 195.3,382.2 197.0,382.3 198.7,382.9 200.4,383.6 202.1,382.3 203.8,382.5 205.5,383.2 207.2,383.8 208.9,383.1 210.6,382.8 212.3,383.9 214.0,382.2 215.7,383.6 217.4,382.6 219.1,382.4 220.8,382.3 222.5,382.7 224.2,383.6 225.9,382.4 227.6,383.1 229.3,383.3 231.0,382.8 232.7,383.1 234.4,382.2 236.1,382.2 237.8,382.5 239.5,383.3 241.2,382.9 242.2,382.7 243.2,382.8 244.2,382.6 245.2,382.1 246.2,381.1 247.2,379.6 248.2,377.1 249.2,373.6 250.2,369.1 251.2,363.9 252.2,358.7 253.2,354.2 254.2,351.3 255.2,350.6 256.2,353.4 257.2,359.4 258.2,366.4 259.2,372.8 260.2,377.5 261.2,380.4 262.2,381.9 263.2,387.8 264.2,388.2 265.2,385.3 266.2,382.5 267.2,382.3 268.2,383.3 269.2,382.9 270.2,382.4 271.2,383.9 272.2,383.6 273.9,382.2 275.6,383.2 277.3,383.1 279.0,384.1 280.7,383.7 282.4,382.4 284.1,384.4 285.8,381.9 287.5,382.8 289.2,383.8 290.9,382.0 292.6,383.0 294.3,381.6 296.0,383.5 297.7,383.8 299.4,383.2 301.1,384.1 302.8,382.4 304.5,383.6 306.2,383.3 307.9,383.2 309.6,382.9 311.3,384.0 313.0,384.3 314.7,382.9 316.4,383.5 318.1,381.7 319.8,383.6 321.5,383.4 323.2,384.5 324.9,384.0 326.6,382.4 328.3,382.7 330.0,383.5 331.7,382.0 333.4,382.9 335.1,382.3 336.8,382.2 338.5,382.1 340.2,383.6 341.9,382.2 343.6,382.5 345.3,382.8 347.0,383.8 348.7,382.1 350.4,382.9 352.1,383.1 353.8,383.8 355.5,383.7 357.2,383.8 358.9,382.5 360.6,382.8 362.3,382.7 364.0,383.8 365.7,384.0 367.4,382.3 369.1,382.3 370.8,382.4 372.5,382.4 374.2,383.0 375.9,383.2 377.6,382.5 379.3,382.0 381.0,382.8 382.7,382.7 384.4,383.1 386.1,384.0 387.8,383.4 389.5,383.0 391.2,383.2 392.9,383.4 394.6,382.1 396.3,383.8 398.0,383.6 399.7,383.8 401.4,383.6 403.1,382.8 404.8,382.8 406.5,382.2 408.2,383.3 409.9,382.1 411.6,382.1 413.3,382.4 415.0,382.3 416.7,382.7 418.4,382.1 420.1,382.5 421.8,382.7 423.5,382.6 425.2,382.9 426.9,382.5 428.6,383.4 430.3,383.1 432.0,382.6 433.7,382.8 435.4,382.8 437.1,382.9 438.8,382.6 440.5,383.3 442.2,383.5 443.9,383.0 445.6,383.0 447.3,382.6 449.0,382.6 450.7,382.8 452.4,382.8 454.1,383.3 455.8,382.7 457.5,382.5 459.2,383.5 460.9,383.0 462.6,382.6 464.3,383.0 466.0,382.5 467.7,383.0 469.4,383.5 471.1,383.4 472.8,383.2" fill="none" stroke="#207020" stroke-width="1.8" stroke-linejoin="round"/><polyline points="146,516.5 178,516.5" fill="none" stroke="#207820" stroke-width="1.2"/><polyline points="178,505 390.5,505" fill="none" stroke="#60a060" stroke-width="1.1"/><polyline points="390.5,505 390.5,516.5 474,516.5" fill="none" stroke="#207820" stroke-width="1.2"/><rect x="248" y="514" width="14" height="4" fill="#f8b070"/><polyline points="146,576 248,576" fill="none" stroke="#208020" stroke-width="1.1"/><rect x="248" y="556" width="14" height="3" fill="#90b890"/><rect x="248" y="559" width="14" height="4" fill="#8000ff"/><polyline points="262,556 262,576 474,576" fill="none" stroke="#208020" stroke-width="1.4"/><line x1="178.5" y1="273" x2="178.5" y2="580" stroke="#ff40ff" stroke-width="1.3"/><line x1="247.5" y1="273" x2="247.5" y2="580" stroke="#3c3cff" stroke-width="1.1"/><path d="M173.5 272 L183.5 272 L178.5 279 Z" fill="#ff00ff"/><path d="M242.5 272 L252.5 272 L247.5 279 Z" fill="#4040ff"/><line x1="193" y1="31" x2="226" y2="113.5" stroke="#000" stroke-width="2.4"/><circle cx="226" cy="113.5" r="3.7" fill="#000"/><line x1="568.5" y1="31.5" x2="521.5" y2="149.5" stroke="#000" stroke-width="2.4"/><circle cx="521.5" cy="149.5" r="3.7" fill="#000"/></svg>
</body></html>
